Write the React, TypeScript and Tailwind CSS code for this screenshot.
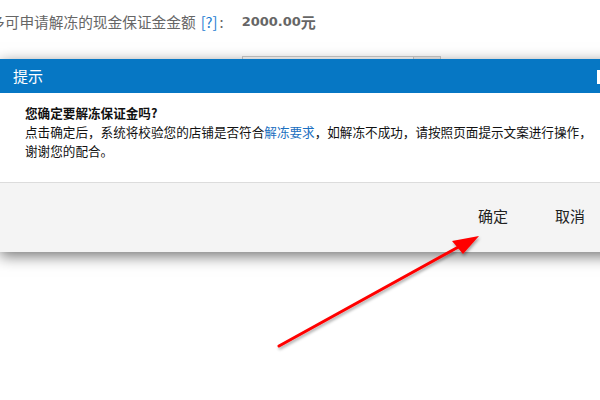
const CJK = "font-['Noto_Sans_CJK_SC',sans-serif]";

export default function App() {
  return (
    <div className={`relative w-[600px] h-[400px] overflow-hidden bg-white ${CJK}`}>
      {/* page behind the dialog */}
      <div className="flex items-center pt-[12px] -ml-[10px] h-[32px] text-[14.7px] text-[#666] whitespace-nowrap">
        <span>多可申请解冻的现金保证金金额</span>
        <span className="ml-[5px] text-[#1a7bd1]">[?]</span>
        <span className="ml-[2px]">:</span>
        <span className="ml-[18px] font-['DejaVu_Sans',sans-serif] font-bold text-[13px] text-[#666]">2000.00</span>
        <span className="font-bold text-[15px]">元</span>
      </div>
      <div className="ml-[242px] mt-[24px] flex w-[199px] h-[24px] border border-[#ccc]">
        <div className="flex-1" />
        <div className="w-[27px] border-l border-[#ccc] bg-[#f0f0f0]" />
      </div>

      {/* dialog */}
      <div className="absolute left-0 top-[59px] w-[620px] shadow-[0_4px_14px_rgba(0,0,0,0.55)]">
        <div className="flex items-center h-[34px] bg-[#0677c4] pl-[13px] relative">
          <span className="text-white text-[15px]">提示</span>
          <span className="absolute left-[597px] top-[11px] w-[3px] h-[14px] bg-white" />
        </div>
        <div className="bg-white h-[89px] pt-[10px] pl-[25px] text-[12.6px] leading-[19px] text-[#111] whitespace-nowrap">
          <p className="font-bold">您确定要解冻保证金吗?</p>
          <p>
            点击确定后，系统将校验您的店铺是否符合<span className="text-[#1a6fc0]">解冻要求</span>，如解冻不成功，请按照页面提示文案进行操作，
          </p>
          <p>谢谢您的配合。</p>
        </div>
        <div className="h-[70px] border-t border-[#dcdcdc] bg-[#f4f4f4] flex items-center pb-[2px]">
          <span className="ml-[478px] text-[15px] text-[#222]">确定</span>
          <span className="ml-[47px] text-[15px] text-[#222]">取消</span>
        </div>
      </div>

      {/* red annotation arrow */}
      <svg className="absolute left-0 top-0" width="600" height="400" viewBox="0 0 600 400">
        <defs>
          <filter id="sh" x="-20%" y="-20%" width="140%" height="140%">
            <feDropShadow dx="1" dy="2" stdDeviation="1.5" floodColor="#000" floodOpacity="0.35" />
          </filter>
        </defs>
        <g filter="url(#sh)">
          <line x1="279" y1="346" x2="462" y2="245" stroke="#f00" strokeWidth="3" strokeLinecap="round" />
          <polygon points="479,236 452,241 463,254" fill="#f00" />
        </g>
      </svg>
    </div>
  );
}
